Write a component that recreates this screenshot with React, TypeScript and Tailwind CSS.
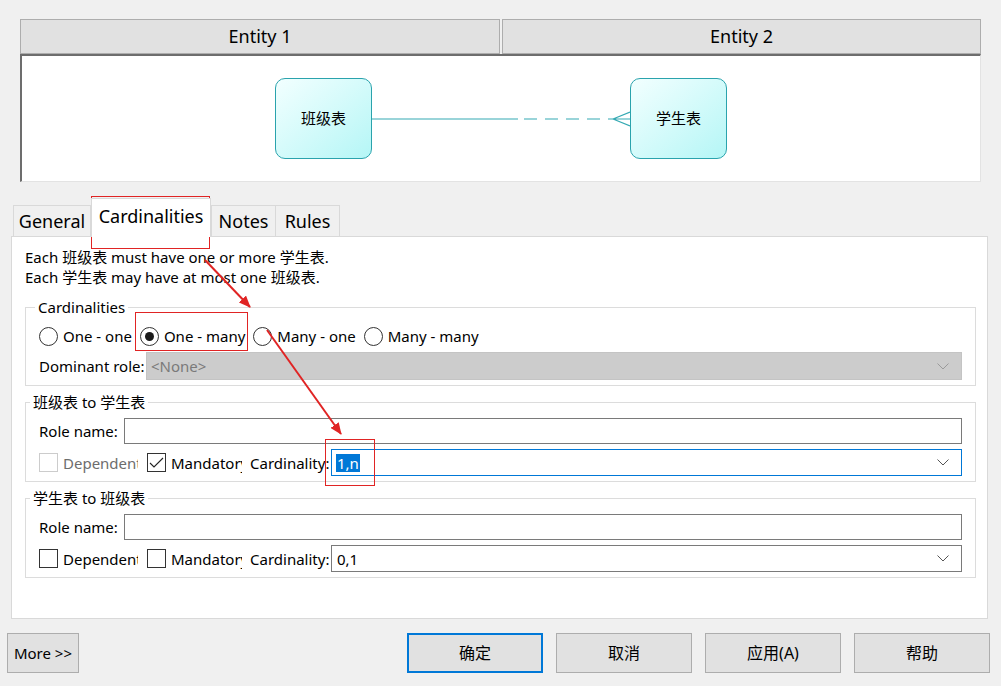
import type { ReactNode } from 'react'

const font = "font-['Noto_Sans','Noto_Sans_CJK_SC',sans-serif]"

function Chevron({ color = '#555' }: { color?: string }) {
  return (
    <svg width="12" height="7" viewBox="0 0 12 7" className="shrink-0">
      <path d="M0.5 0.5 L6 6 L11.5 0.5" fill="none" stroke={color} strokeWidth="1" />
    </svg>
  )
}

function Radio({ checked, label }: { checked?: boolean; label: string }) {
  return (
    <label className="flex items-center gap-[5px]">
      <span className="w-[19px] h-[19px] rounded-full border border-[#333] bg-white flex items-center justify-center">
        {checked && <span className="w-[9px] h-[9px] rounded-full bg-[#1a1a1a]" />}
      </span>
      <span>{label}</span>
    </label>
  )
}

function Check({ checked, disabled }: { checked?: boolean; disabled?: boolean }) {
  return (
    <span
      className={`w-[19px] h-[19px] shrink-0 border bg-white flex items-center justify-center ${
        disabled ? 'border-[#cccccc]' : 'border-[#333]'
      }`}
    >
      {checked && (
        <svg width="15" height="12" viewBox="0 0 15 12">
          <path d="M1 6 L5 10 L14 1" fill="none" stroke="#222" strokeWidth="1.1" />
        </svg>
      )}
    </span>
  )
}

function Group({ title, indent, children }: { title: string; indent: string; children: ReactNode }) {
  return (
    <fieldset className="w-[951px] border border-[#dcdcdc]">
      <legend className={`${indent} px-[3px] text-[15px] leading-[20px]`}>{title}</legend>
      <div className="px-[13px]">{children}</div>
    </fieldset>
  )
}

function RoleBlock({ focused, card, mandatory }: { focused?: boolean; card: ReactNode; mandatory?: boolean }) {
  return (
    <div className="flex flex-col gap-[5px] pt-[6px] pb-[5px]">
      <div className="flex items-center h-[26px]">
        <span className="w-[85px] shrink-0">Role name:</span>
        <div className="flex-1 h-[26px] border border-[#7a7a7a] bg-white" />
      </div>
      <div className="flex items-center h-[27px]">
        <Check disabled={focused} />
        <span className={`ml-[5px] w-[75px] overflow-hidden whitespace-nowrap ${focused ? 'text-[#6d6d6d]' : ''}`}>
          Dependent
        </span>
        <span className="ml-[9px]">
          <Check checked={mandatory} />
        </span>
        <span className="ml-[5px] w-[71px] overflow-hidden whitespace-nowrap">Mandatory</span>
        <span className="ml-[8px] w-[76px] whitespace-nowrap">Cardinality:</span>
        <div
          className={`ml-[5px] flex-1 h-[27px] bg-white flex items-center justify-between pl-[4px] pr-[12px] ${
            focused ? 'border border-[#0078d7]' : 'border border-[#7a7a7a]'
          }`}
        >
          {card}
          <Chevron />
        </div>
      </div>
    </div>
  )
}

export default function App() {
  return (
    <div className={`relative w-[1001px] h-[686px] bg-[#f0f0f0] overflow-hidden text-black ${font}`}>
      {/* entity header + diagram */}
      <div className="pt-[19px] pl-[20px]">
        <div className="flex gap-[2px] w-[961px] text-[18px]">
          <div className="w-[480px] h-[35px] flex items-center justify-center bg-[#e1e1e1] border border-[#adadad]">
            Entity 1
          </div>
          <div className="flex-1 h-[35px] flex items-center justify-center bg-[#e1e1e1] border border-[#adadad]">
            Entity 2
          </div>
        </div>
        <div className="w-[961px] h-[128px] bg-white border-t-2 border-l-2 border-t-[#6d6d6d] border-l-[#6d6d6d] border-r border-b border-r-[#e3e3e3] border-b-[#e3e3e3] flex items-center pl-[253px] font-['Noto_Sans_CJK_SC',sans-serif] text-[15px]">
          <div className="w-[97px] h-[81px] rounded-[10px] border border-[#2aa3ad] bg-gradient-to-br from-[#f2ffff] to-[#b4f6f6] flex items-center justify-center">
            班级表
          </div>
          <svg width="258" height="20" viewBox="0 0 258 20">
            <line x1="0" y1="10" x2="146" y2="10" stroke="#34a9b3" strokeWidth="1.2" />
            <line x1="152" y1="10" x2="241" y2="10" stroke="#34a9b3" strokeWidth="1.2" strokeDasharray="13 8" />
            <path d="M241 10 L258 3 M241 10 L258 10 M241 10 L258 17" fill="none" stroke="#34a9b3" strokeWidth="1.2" />
          </svg>
          <div className="w-[97px] h-[81px] rounded-[10px] border border-[#2aa3ad] bg-gradient-to-br from-[#f2ffff] to-[#b4f6f6] flex items-center justify-center">
            学生表
          </div>
        </div>
      </div>

      {/* tabs */}
      <div className="mt-[15px] pl-[13px] flex items-end h-[39px] text-[18px]">
        <div className="w-[78px] h-[31px] bg-[#f0f0f0] border border-[#d9d9d9] border-b-0 flex items-center justify-center">
          General
        </div>
        <div className="relative z-10 w-[120px] h-[39px] -mb-px bg-white border border-[#d9d9d9] border-b-0 flex items-start justify-center pt-[4px]">
          Cardinalities
        </div>
        <div className="w-[65px] h-[31px] bg-[#f0f0f0] border border-[#d9d9d9] border-b-0 flex items-center justify-center">
          Notes
        </div>
        <div className="w-[64px] h-[31px] bg-[#f0f0f0] border border-l-0 border-[#d9d9d9] border-b-0 flex items-center justify-center">
          Rules
        </div>
      </div>

      {/* tab page */}
      <div className="ml-[11px] w-[977px] h-[383px] bg-white border border-[#d9d9d9] pl-[13px] pt-[10px] text-[15px] leading-[20px]">
        <p>Each 班级表 must have one or more 学生表.</p>
        <p>Each 学生表 may have at most one 班级表.</p>

        <div className="mt-[10px] flex flex-col gap-[6px]">
          <Group title="Cardinalities" indent="ml-[9px]">
            <div className="flex items-center gap-[8px] pt-[8px] h-[30px]">
              <Radio label="One - one" />
              <Radio checked label="One - many" />
              <Radio label="Many - one" />
              <Radio label="Many - many" />
            </div>
            <div className="flex items-center mt-[5px] mb-[5px]">
              <span className="w-[107px] shrink-0">Dominant role:</span>
              <div className="flex-1 h-[28px] bg-[#cccccc] border border-[#c4c4c4] flex items-center justify-between pl-[4px] pr-[12px] text-[#7a7a7a]">
                &lt;None&gt;
                <Chevron color="#9a9a9a" />
              </div>
            </div>
          </Group>

          <Group title="班级表 to 学生表" indent="ml-[4px]">
            <RoleBlock
              focused
              mandatory
              card={<span className="bg-[#0078d7] text-white px-px leading-[18px]">1,n</span>}
            />
          </Group>

          <Group title="学生表 to 班级表" indent="ml-[4px]">
            <RoleBlock card={<span className="px-px">0,1</span>} />
          </Group>
        </div>
      </div>

      {/* buttons */}
      <div className="mt-[14px] flex items-center pl-[7px] pr-[11px] text-[16px]">
        <button className="w-[72px] h-[40px] bg-[#e1e1e1] border border-[#adadad] text-[15px]">More &gt;&gt;</button>
        <div className="ml-auto flex gap-[13px]">
          <button className="w-[136px] h-[40px] bg-[#e1e1e1] border-2 border-[#0078d7]">确定</button>
          <button className="w-[136px] h-[40px] bg-[#e1e1e1] border border-[#adadad]">取消</button>
          <button className="w-[136px] h-[40px] bg-[#e1e1e1] border border-[#adadad]">应用(A)</button>
          <button className="w-[136px] h-[40px] bg-[#e1e1e1] border border-[#adadad]">帮助</button>
        </div>
      </div>

      {/* red annotations */}
      <div className="absolute left-[91px] top-[196px] w-[119px] h-[53px] border border-[#e02424] pointer-events-none" />
      <div className="absolute left-[135px] top-[312px] w-[113px] h-[39px] border border-[#e02424] pointer-events-none" />
      <div className="absolute left-[325px] top-[439px] w-[50px] h-[47px] border border-[#e02424] pointer-events-none" />
      <svg className="absolute left-0 top-0 pointer-events-none" width="1001" height="686" viewBox="0 0 1001 686">
        <defs>
          <marker id="ah" markerWidth="12" markerHeight="10" refX="11" refY="5" orient="auto" markerUnits="userSpaceOnUse">
            <path d="M0 0 L12 5 L0 10 Z" fill="#e02424" />
          </marker>
        </defs>
        <line x1="205" y1="260" x2="250" y2="307" stroke="#e02424" strokeWidth="2" markerEnd="url(#ah)" />
        <line x1="267" y1="330" x2="341" y2="434" stroke="#e02424" strokeWidth="2" markerEnd="url(#ah)" />
      </svg>
    </div>
  )
}
